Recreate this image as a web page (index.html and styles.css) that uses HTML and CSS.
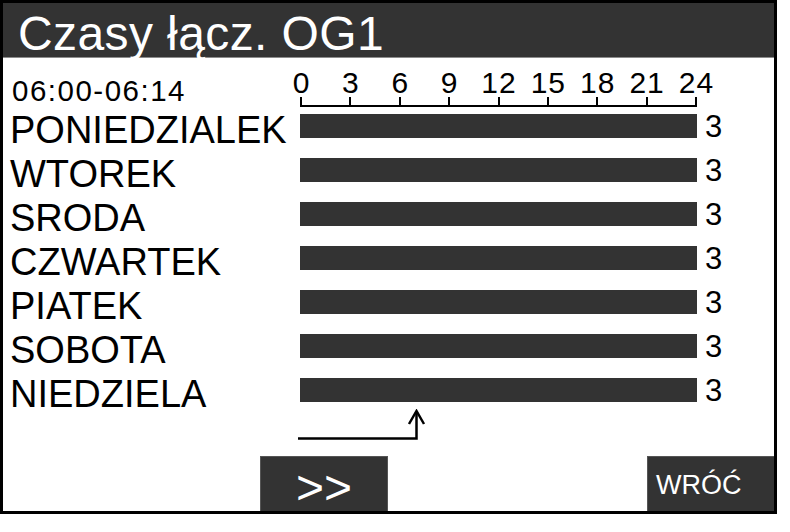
FILE: index.html
```html
<!DOCTYPE html>
<html lang="pl">
<head>
  <meta charset="UTF-8">
  <title>Czasy łącz. OG1</title>
  <link rel="stylesheet" href="styles.css">
</head>
<body>
<div class="screen">
  <!-- Nagłówek ekranu -->
  <header class="title">Czasy łącz. OG1</header>

  <!-- Wykres tygodniowy: etykieta dnia, pasek 0-24h, liczba załączeń -->
  <div class="chart">
    <div class="range">06:00-06:14</div>
    <div class="axis">
      <div class="hours">
        <span>0</span><span>3</span><span>6</span><span>9</span><span>12</span><span>15</span><span>18</span><span>21</span><span>24</span>
      </div>
      <div class="ticks"><i></i><i></i><i></i><i></i><i></i><i></i><i></i><i></i></div>
    </div>
    <div></div>

    <div class="day">PONIEDZIALEK</div><div class="bar"></div><div class="count">3</div>
    <div class="day">WTOREK</div><div class="bar"></div><div class="count">3</div>
    <div class="day">SRODA</div><div class="bar"></div><div class="count">3</div>
    <div class="day">CZWARTEK</div><div class="bar"></div><div class="count">3</div>
    <div class="day">PIATEK</div><div class="bar"></div><div class="count">3</div>
    <div class="day">SOBOTA</div><div class="bar"></div><div class="count">3</div>
    <div class="day">NIEDZIELA</div><div class="bar"></div><div class="count">3</div>

    <div></div>
    <div class="cursor">
      <svg width="130" height="34" viewBox="0 0 130 34" fill="none" stroke="#000" stroke-width="2.5">
        <path d="M1 29.5H119.5V2"></path>
        <path d="M112 15L119.5 2L127 15"></path>
      </svg>
    </div>
    <div></div>
  </div>

  <!-- Przyciski dolne -->
  <footer class="buttons">
    <button class="btn btn-next">&gt;&gt;</button>
    <button class="btn btn-back">WRÓĆ</button>
  </footer>
</div>
</body>
</html>
```

FILE: styles.css
```css
/* Ekran panelu */
body {
  margin: 0;
  background: #ffffff;
  font-family: "Liberation Sans", Arial, sans-serif;
  color: #000000;
}

.screen {
  width: 777px;
  height: 514px;
  box-sizing: border-box;
  border: 3px solid #000000;
  display: flex;
  flex-direction: column;
}

.title {
  height: 55px;
  box-sizing: border-box;
  padding: 7px 0 0 15px;
  background: #333333;
  border-bottom: 1px solid #8c8c8c;
  color: #ffffff;
  font-size: 48px;
  line-height: 48px;
  letter-spacing: 0.4px;
  white-space: nowrap;
}

/* Siatka wykresu */
.chart {
  display: grid;
  grid-template-columns: 290px 397px auto;
  grid-template-rows: 52px repeat(7, 44px) auto;
  align-items: start;
  padding-left: 7px;
}

.range {
  padding: 18px 0 0 2px;
  font-size: 29.5px;
  line-height: 29px;
  letter-spacing: 1.5px;
  white-space: nowrap;
}

.axis {
  padding-top: 10px;
}

.hours {
  display: flex;
  width: 444.4px;
  margin-left: -23.2px;
  font-size: 30px;
  line-height: 29px;
  letter-spacing: 1px;
}

.hours span {
  flex: 1;
  text-align: center;
}

.ticks {
  display: flex;
  width: 397px;
  height: 10px;
  box-sizing: border-box;
  border-bottom: 2px solid #000000;
}

.ticks i {
  flex: 1;
  border-left: 2px solid #000000;
}

.ticks i:last-child {
  border-right: 2px solid #000000;
}

.day {
  font-size: 38px;
  line-height: 40px;
  white-space: nowrap;
}

.bar {
  height: 24px;
  margin-top: 4px;
  background: #333333;
}

.count {
  padding-left: 8px;
  font-size: 31px;
  line-height: 34px;
}

.cursor {
  margin: -9px 0 0 -3px;
}

.cursor svg {
  display: block;
}

/* Przyciski */
.buttons {
  margin-top: auto;
  display: flex;
  height: 55px;
}

.btn {
  height: 55px;
  box-sizing: border-box;
  border: 1px solid #555555;
  border-bottom: none;
  background: #333333;
  color: #ffffff;
  font-family: "Liberation Sans", Arial, sans-serif;
  cursor: pointer;
}

.btn-next {
  width: 128px;
  margin-left: 257px;
  padding: 7px 0 0;
  font-size: 48px;
  line-height: 48px;
}

.btn-back {
  width: 127px;
  margin-left: auto;
  padding: 2px 0 0 8px;
  border-right: none;
  text-align: left;
  font-size: 27px;
  line-height: 51px;
}
```
